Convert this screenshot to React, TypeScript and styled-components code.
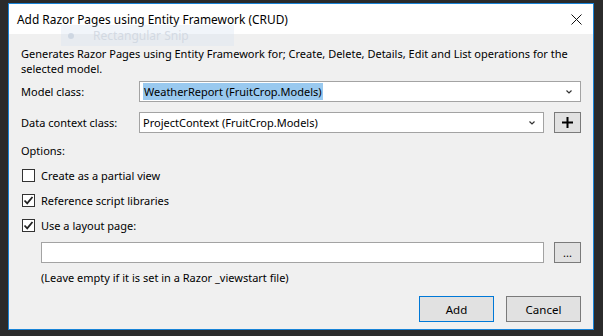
import React from "react";
import styled, { createGlobalStyle } from "styled-components";

const GlobalStyle = createGlobalStyle`
  html, body {
    margin: 0;
    padding: 0;
    background: #2b2b2b;
  }
  body {
    font-family: "Noto Sans", "Open Sans", sans-serif;
    font-size: 11px;
    color: #000;
  }
`;

const Screen = styled.div`
  width: 603px;
  height: 336px;
  box-sizing: border-box;
  padding: 3px 9px 6px 8px;
  background: #2b2b2b;
  position: relative;
  overflow: hidden;
`;

const Dialog = styled.div`
  width: 586px;
  height: 327px;
  box-sizing: border-box;
  border: 1px solid #1883d7;
  background: #f0f0f0;
  display: flex;
  flex-direction: column;
`;

const TitleBar = styled.div`
  height: 30px;
  background: #fff;
  display: flex;
  align-items: center;
  justify-content: space-between;
  padding: 0 10px 0 8px;
`;

const TitleText = styled.span`
  font-size: 11.9px;
`;

const CloseButton = styled.button`
  width: 14px;
  height: 14px;
  padding: 0;
  border: 0;
  background: transparent;
  display: flex;
  align-items: center;
  justify-content: center;
`;

const Body = styled.div`
  flex: 1;
  display: flex;
  flex-direction: column;
  padding: 12px 12px 7px 12px;
`;

const Description = styled.p`
  margin: 0 0 5px;
  line-height: 15px;
`;

const FieldRow = styled.div<{ $gap?: number }>`
  display: flex;
  align-items: center;
  margin-bottom: ${({ $gap }) => $gap ?? 0}px;
`;

const FieldLabel = styled.label`
  width: 118px;
  flex-shrink: 0;
`;

const Select = styled.div<{ $width: number }>`
  width: ${({ $width }) => $width}px;
  height: 21px;
  box-sizing: border-box;
  border: 1px solid #a3a3a3;
  background: #fff;
  display: flex;
  align-items: center;
  justify-content: space-between;
  padding: 0 8px 0 3px;
`;

const Highlight = styled.span`
  background: #99c9ef;
  padding: 1px 1px;
`;

const SmallButton = styled.button`
  width: 27px;
  height: 21px;
  margin-left: 10px;
  box-sizing: border-box;
  border: 1px solid #7a7a7a;
  background: #e1e1e1;
  padding: 0;
  display: flex;
  align-items: center;
  justify-content: center;
  font-family: inherit;
  font-size: 11px;
  color: #000;
`;

const SectionLabel = styled.div`
  line-height: 15px;
  margin-top: 10px;
  margin-bottom: 9px;
`;

const CheckRow = styled.label`
  display: flex;
  align-items: center;
  height: 16px;
  margin-bottom: 9px;
  padding-left: 1px;
`;

const Box = styled.span`
  width: 13px;
  height: 13px;
  box-sizing: border-box;
  border: 1px solid #333;
  background: #fff;
  margin-right: 6px;
  display: flex;
  align-items: center;
  justify-content: center;
`;

const Indented = styled.div`
  padding-left: 20px;
`;

const TextInput = styled.div`
  width: 503px;
  height: 21px;
  box-sizing: border-box;
  border: 1px solid #a3a3a3;
  background: #fff;
`;

const Hint = styled.div`
  line-height: 15px;
  margin-top: 7px;
`;

const Footer = styled.div`
  margin-top: auto;
  display: flex;
  justify-content: flex-end;
  gap: 12px;
`;

const DialogButton = styled.button<{ $primary?: boolean }>`
  width: 75px;
  height: 26px;
  box-sizing: border-box;
  border: 1px solid ${({ $primary }) => ($primary ? "#0078d7" : "#7a7a7a")};
  background: #e1e1e1;
  font-family: inherit;
  font-size: 11.5px;
  color: #000;
  padding: 0;
`;

const SnipGhost = styled.div`
  position: absolute;
  left: 61px;
  top: 25px;
  width: 173px;
  height: 21px;
  background: rgba(214, 226, 240, 0.35);
  display: flex;
  align-items: center;
  color: rgba(205, 212, 222, 0.8);
  font-size: 12px;
  pointer-events: none;
`;

const GhostDot = styled.span`
  width: 6px;
  height: 6px;
  border-radius: 50%;
  background: rgba(200, 210, 222, 0.8);
  margin: 0 19px 0 7px;
`;

const Chevron = () => (
  <svg width="6" height="4" viewBox="0 0 6 4">
    <path d="M0.5 0.5 L3 3 L5.5 0.5" fill="none" stroke="#333" strokeWidth="1.2" />
  </svg>
);

const CheckMark = () => (
  <svg width="11" height="11" viewBox="0 0 11 11">
    <path d="M1.5 5.5 L4.2 8.3 L9.5 2" fill="none" stroke="#222" strokeWidth="1.8" />
  </svg>
);

const Check = ({ checked, label }: { checked?: boolean; label: string }) => (
  <CheckRow>
    <Box>{checked && <CheckMark />}</Box>
    {label}
  </CheckRow>
);

export default function App() {
  return (
    <Screen>
      <GlobalStyle />
      <Dialog>
        <TitleBar>
          <TitleText>Add Razor Pages using Entity Framework (CRUD)</TitleText>
          <CloseButton aria-label="Close">
            <svg width="11" height="11" viewBox="0 0 11 11">
              <path d="M0.5 0.5 L10.5 10.5 M10.5 0.5 L0.5 10.5" stroke="#111" strokeWidth="1" />
            </svg>
          </CloseButton>
        </TitleBar>
        <Body>
          <Description>
            Generates Razor Pages using Entity Framework for; Create, Delete, Details, Edit and List operations for the
            selected model.
          </Description>
          <FieldRow $gap={10}>
            <FieldLabel>Model class:</FieldLabel>
            <Select $width={442}>
              <Highlight>WeatherReport (FruitCrop.Models)</Highlight>
              <Chevron />
            </Select>
          </FieldRow>
          <FieldRow>
            <FieldLabel>Data context class:</FieldLabel>
            <Select $width={405}>
              <span>ProjectContext (FruitCrop.Models)</span>
              <Chevron />
            </Select>
            <SmallButton aria-label="Add">
              <svg width="11" height="11" viewBox="0 0 11 11">
                <path d="M5.5 0 V11 M0 5.5 H11" stroke="#000" strokeWidth="2" />
              </svg>
            </SmallButton>
          </FieldRow>
          <SectionLabel>Options:</SectionLabel>
          <Check label="Create as a partial view" />
          <Check checked label="Reference script libraries" />
          <Check checked label="Use a layout page:" />
          <Indented>
            <FieldRow>
              <TextInput />
              <SmallButton>...</SmallButton>
            </FieldRow>
            <Hint>(Leave empty if it is set in a Razor _viewstart file)</Hint>
          </Indented>
          <Footer>
            <DialogButton $primary>Add</DialogButton>
            <DialogButton>Cancel</DialogButton>
          </Footer>
        </Body>
      </Dialog>
      <SnipGhost>
        <GhostDot />
        Rectangular Snip
      </SnipGhost>
    </Screen>
  );
}
